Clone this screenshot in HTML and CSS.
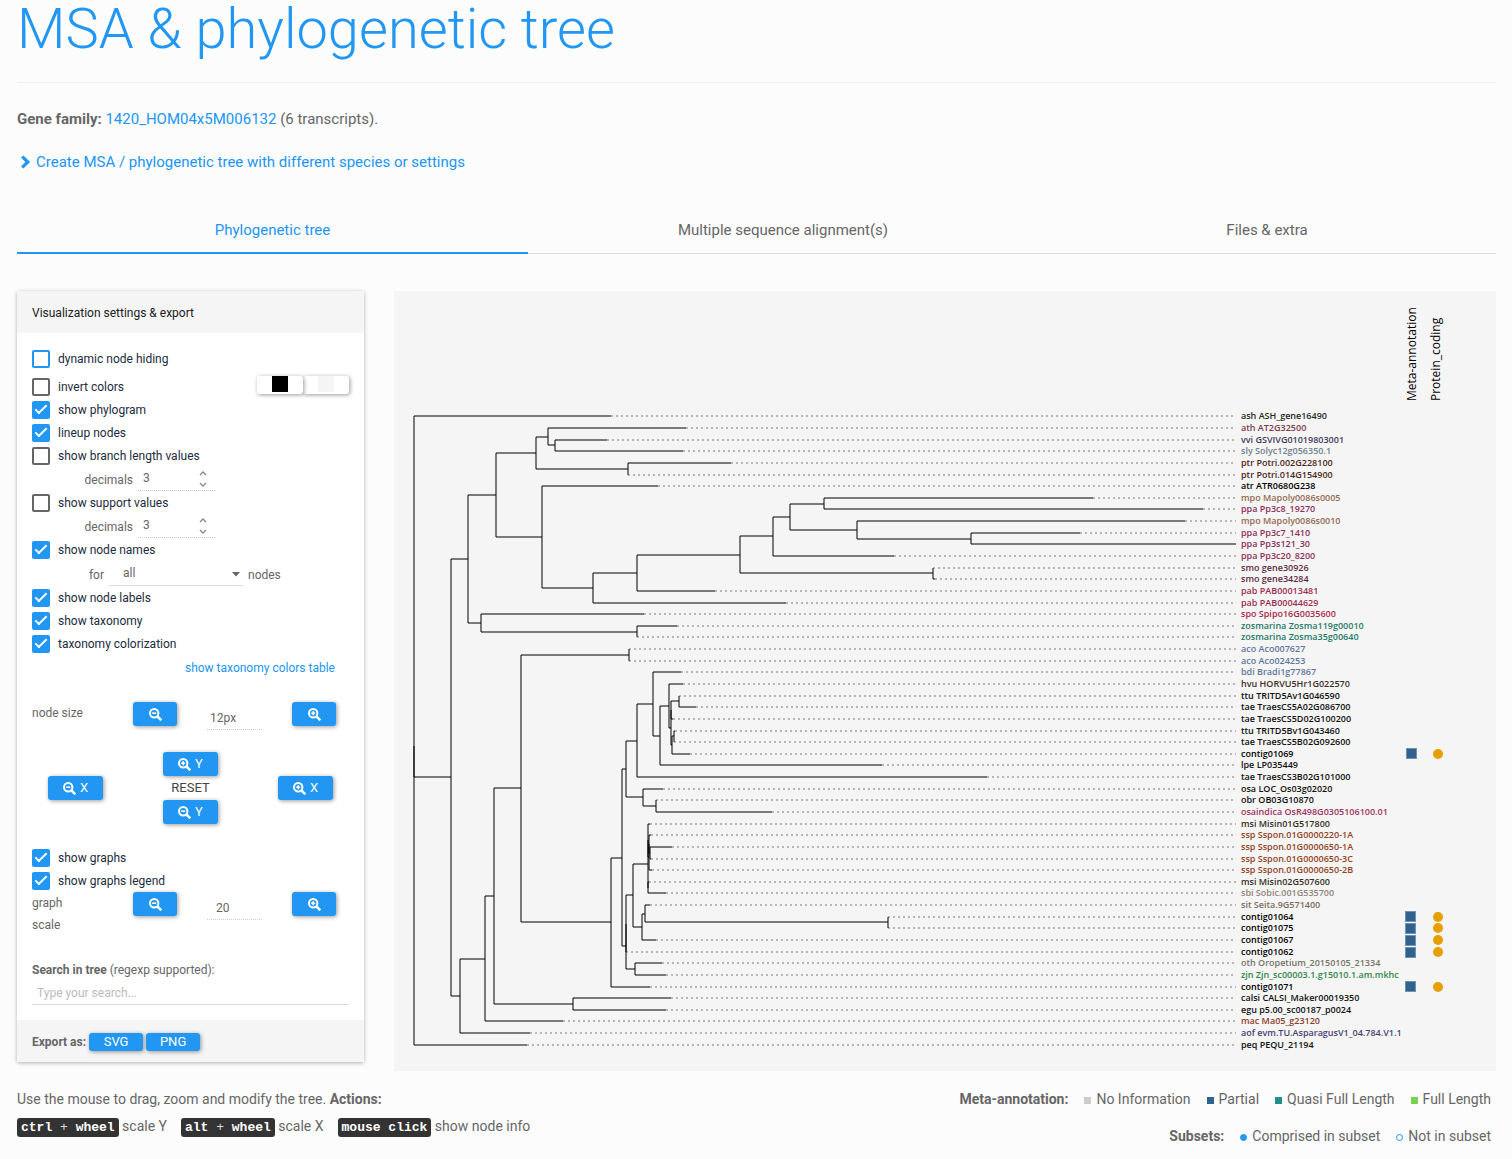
FILE: index.html
```html
<!DOCTYPE html>
<html lang="en">
<head>
<meta charset="utf-8">
<title>MSA &amp; phylogenetic tree</title>
<link rel="stylesheet" href="styles.css">
</head>
<body>
<svg class="sprite" aria-hidden="true">
  <symbol id="zoom-out" viewBox="0 0 13 13"><circle cx="5.2" cy="5.2" r="4.200" fill="none" stroke="currentColor" stroke-width="2"/><path d="M8.400 8.400L12.300 12.300" stroke="currentColor" stroke-width="2.600"/><path d="M3.200 5.200H7.200" stroke="currentColor" stroke-width="1.600"/></symbol>
  <symbol id="zoom-in" viewBox="0 0 13 13"><circle cx="5.2" cy="5.2" r="4.200" fill="none" stroke="currentColor" stroke-width="2"/><path d="M8.400 8.400L12.300 12.300" stroke="currentColor" stroke-width="2.600"/><path d="M3.200 5.200H7.200M5.200 3.200V7.200" stroke="currentColor" stroke-width="1.600"/></symbol>
  <symbol id="spin" viewBox="0 0 8 16"><path d="M1 4L4 1L7 4M1 12L4 15L7 12" fill="none" stroke="#888" stroke-width="1.3"/></symbol>
</svg>

<header>
  <h1>MSA &amp; phylogenetic tree</h1>
</header>

<p class="intro"><strong>Gene family:</strong> <a href="#family">1420_HOM04x5M006132</a> (6 transcripts).</p>
<p class="intro"><a href="#create" class="create"><svg width="11" height="14" viewBox="0 0 11 14" aria-hidden="true"><path d="M1 2.6L3.4 0.4L10.2 7L3.4 13.6L1 11.4L5.3 7Z" fill="currentColor"/></svg>Create MSA / phylogenetic tree with different species or settings</a></p>

<nav class="tabs">
  <a href="#tree" class="active">Phylogenetic tree</a>
  <a href="#msa">Multiple sequence alignment(s)</a>
  <a href="#files">Files &amp; extra</a>
</nav>

<main class="workspace">
  <form class="panel">
    <h2 class="panel-head">Visualization settings &amp; export</h2>
    <div class="panel-body">
      <label class="check first"><input type="checkbox" class="focus">dynamic node hiding</label>
      <div class="invert-row">
        <label class="check"><input type="checkbox">invert colors</label>
        <div class="swatches">
          <button type="button" aria-label="Foreground color"><span class="swatch black"></span></button><button type="button" aria-label="Background color"><span class="swatch light"></span></button>
        </div>
      </div>
      <label class="check"><input type="checkbox" checked>show phylogram</label>
      <label class="check"><input type="checkbox" checked>lineup nodes</label>
      <label class="check"><input type="checkbox">show branch length values</label>
      <div class="sub">
        <label for="dec1">decimals</label>
        <span class="number"><input id="dec1" type="number" value="3"><svg width="8" height="16" aria-hidden="true"><use href="#spin"/></svg></span>
      </div>
      <label class="check"><input type="checkbox">show support values</label>
      <div class="sub">
        <label for="dec2">decimals</label>
        <span class="number"><input id="dec2" type="number" value="3"><svg width="8" height="16" aria-hidden="true"><use href="#spin"/></svg></span>
      </div>
      <label class="check"><input type="checkbox" checked>show node names</label>
      <div class="sub names">
        <label for="which">for</label>
        <span class="choice"><select id="which"><option>all</option></select><svg width="8" height="5" viewBox="0 0 8 5" aria-hidden="true"><path d="M0 0H8L4 4.500Z" fill="#666"/></svg></span>
        <span>nodes</span>
      </div>
      <label class="check"><input type="checkbox" checked>show node labels</label>
      <label class="check"><input type="checkbox" checked>show taxonomy</label>
      <label class="check"><input type="checkbox" checked>taxonomy colorization</label>
      <p class="taxonomy"><a href="#colors">show taxonomy colors table</a></p>

      <div class="scale">
        <label for="size">node size</label>
        <button type="button" class="btn" aria-label="Smaller nodes"><svg class="icon"><use href="#zoom-out"/></svg></button>
        <input id="size" type="text" value="12px">
        <button type="button" class="btn" aria-label="Larger nodes"><svg class="icon"><use href="#zoom-in"/></svg></button>
      </div>

      <div class="pad">
        <button type="button" class="btn"><svg class="icon"><use href="#zoom-out"/></svg>X</button>
        <div class="pad-mid">
          <button type="button" class="btn"><svg class="icon"><use href="#zoom-in"/></svg>Y</button>
          <button type="button" class="reset">RESET</button>
          <button type="button" class="btn"><svg class="icon"><use href="#zoom-out"/></svg>Y</button>
        </div>
        <button type="button" class="btn"><svg class="icon"><use href="#zoom-in"/></svg>X</button>
      </div>

      <label class="check"><input type="checkbox" checked>show graphs</label>
      <label class="check"><input type="checkbox" checked>show graphs legend</label>
      <div class="scale graph">
        <label for="gscale">graph<br>scale</label>
        <button type="button" class="btn" aria-label="Smaller graphs"><svg class="icon"><use href="#zoom-out"/></svg></button>
        <input id="gscale" type="text" value="20">
        <button type="button" class="btn" aria-label="Larger graphs"><svg class="icon"><use href="#zoom-in"/></svg></button>
      </div>

      <label for="search" class="search-label"><strong>Search in tree</strong> (regexp supported):</label>
      <input id="search" class="search" type="text" placeholder="Type your search...">
    </div>
    <div class="panel-foot"><strong>Export as:</strong><button type="button" class="btn export">SVG</button><button type="button" class="btn export">PNG</button></div>
  </form>

  <svg class="tree" viewBox="394 291 1102 780" role="img" aria-label="Phylogenetic tree">
    <g class="branches">
      <path d="M611 416H414V746"/><path d="M414 746V777H451"/><path d="M414 746V1045H527"/>
      <path d="M468 559H451V996H460"/><path d="M485 959H460V1033H530"/>
      <path d="M496 495H468V623H481"/><path d="M536 453H496V537H542"/>
      <path d="M548 437H536V469H628"/><path d="M686 428H548V445H555"/>
      <path d="M607 440H555V451H683"/><path d="M731 463H628V475"/>
      <path d="M658 486H542V588H593"/><path d="M637 573H593V603H786"/>
      <path d="M740 555H637V591H715"/><path d="M773 536H740V573H933"/>
      <path d="M790 517H773V556H894"/><path d="M824 504H790V530H857"/>
      <path d="M1093 498H824V509H1203"/><path d="M1185 521H857V539H971"/>
      <path d="M1080 533H971V544H1236"/><path d="M933 568V579H935"/>
      <path d="M644 614H481V632H637"/><path d="M677 626H637V637"/>
      <path d="M494 896H485V1021H563"/><path d="M521 788H494V1004H573"/>
      <path d="M671 998H573V1010H666"/><path d="M629 655H521V922H611"/>
      <path d="M629 649V661"/><path d="M622 858H611V987H650"/>
      <path d="M626 769H622V946H626"/><path d="M637 741H626V797H643"/>
      <path d="M653 704H637V777H987"/><path d="M681 672H653V736H660"/>
      <path d="M669 706H660V765H882"/><path d="M683 684H669V728H671"/>
      <path d="M671 710V745H672"/><path d="M679 701H671V719H673"/>
      <path d="M679 696V707H696"/><path d="M674 736H672V754H690"/>
      <path d="M675 731H674V742"/><path d="M663 789H643V806H656"/>
      <path d="M656 800V812H772"/><path d="M626 924V969H635"/>
      <path d="M633 895H626V952"/><path d="M662 963H635V975H666"/>
      <path d="M648 864H633V927H642"/><path d="M645 914H642V940H656"/>
      <path d="M650 905H645V922H888"/><path d="M888 917V928"/>
      <path d="M648 840V888"/><path d="M650 824H648V857H649"/>
      <path d="M649 882H648V893H666"/><path d="M649 844V870H652"/>
      <path d="M651 835H649V853H650"/><path d="M672 847H650V859H651"/>
    </g>
    <path class="guides" d="M611 416H1236M686 428H1236M607 440H1236M683 451H1236M731 463H1236M628 475H1236M658 486H1236M1093 498H1236M1203 509H1236M1185 521H1236M1080 533H1236M894 556H1236M933 568H1236M935 579H1236M715 591H1236M786 603H1236M644 614H1236M677 626H1236M637 637H1236M629 649H1236M629 661H1236M681 672H1236M683 684H1236M679 696H1236M696 707H1236M673 719H1236M675 731H1236M674 742H1236M690 754H1236M882 765H1236M987 777H1236M663 789H1236M656 800H1236M772 812H1236M650 824H1236M651 835H1236M672 847H1236M651 859H1236M652 870H1236M649 882H1236M666 893H1236M650 905H1236M888 917H1236M888 928H1236M656 940H1236M626 952H1236M662 963H1236M666 975H1236M650 987H1236M671 998H1236M666 1010H1236M563 1021H1236M530 1033H1236M527 1045H1236"/>
    <g class="leaves">
      <text x="1241" y="419" fill="#1d2b22">ash ASH_gene16490</text>
      <text x="1241" y="431" fill="#7a3b4e">ath AT2G32500</text>
      <text x="1241" y="443" fill="#3f3a5c">vvi GSVIVG01019803001</text>
      <text x="1241" y="454" fill="#71808c">sly Solyc12g056350.1</text>
      <text x="1241" y="466" fill="#4a2a20">ptr Potri.002G228100</text>
      <text x="1241" y="478" fill="#4a2a20">ptr Potri.014G154900</text>
      <text x="1241" y="489" fill="#000">atr ATR0680G238</text>
      <text x="1241" y="501" fill="#936a50">mpo Mapoly0086s0005</text>
      <text x="1241" y="512" fill="#8e2f5c">ppa Pp3c8_19270</text>
      <text x="1241" y="524" fill="#936a50">mpo Mapoly0086s0010</text>
      <text x="1241" y="536" fill="#8e2f5c">ppa Pp3c7_1410</text>
      <text x="1241" y="547" fill="#8e2f5c">ppa Pp3s121_30</text>
      <text x="1241" y="559" fill="#8e2f5c">ppa Pp3c20_8200</text>
      <text x="1241" y="571" fill="#5f2c3f">smo gene30926</text>
      <text x="1241" y="582" fill="#5f2c3f">smo gene34284</text>
      <text x="1241" y="594" fill="#9c2f50">pab PAB00013481</text>
      <text x="1241" y="606" fill="#9c2f50">pab PAB00044629</text>
      <text x="1241" y="617" fill="#a82a4a">spo Spipo16G0035600</text>
      <text x="1241" y="629" fill="#1f7a68">zosmarina Zosma119g00010</text>
      <text x="1241" y="640" fill="#1f7a68">zosmarina Zosma35g00640</text>
      <text x="1241" y="652" fill="#62759a">aco Aco007627</text>
      <text x="1241" y="664" fill="#62759a">aco Aco024253</text>
      <text x="1241" y="675" fill="#62759a">bdi Bradi1g77867</text>
      <text x="1241" y="687" fill="#3d2d28">hvu HORVU5Hr1G022570</text>
      <text x="1241" y="699" fill="#111">ttu TRITD5Av1G046590</text>
      <text x="1241" y="710" fill="#111">tae TraesCS5A02G086700</text>
      <text x="1241" y="722" fill="#111">tae TraesCS5D02G100200</text>
      <text x="1241" y="734" fill="#111">ttu TRITD5Bv1G043460</text>
      <text x="1241" y="745" fill="#111">tae TraesCS5B02G092600</text>
      <text x="1241" y="757" fill="#000">contig01069</text>
      <text x="1241" y="768" fill="#111">lpe LP035449</text>
      <text x="1241" y="780" fill="#111">tae TraesCS3B02G101000</text>
      <text x="1241" y="792" fill="#111">osa LOC_Os03g02020</text>
      <text x="1241" y="803" fill="#111">obr OB03G10870</text>
      <text x="1241" y="815" fill="#9c3460">osaindica OsR498G0305106100.01</text>
      <text x="1241" y="827" fill="#35301f">msi Misin01G517800</text>
      <text x="1241" y="838" fill="#8f4424">ssp Sspon.01G0000220-1A</text>
      <text x="1241" y="850" fill="#8f4424">ssp Sspon.01G0000650-1A</text>
      <text x="1241" y="862" fill="#8f4424">ssp Sspon.01G0000650-3C</text>
      <text x="1241" y="873" fill="#8f4424">ssp Sspon.01G0000650-2B</text>
      <text x="1241" y="885" fill="#35301f">msi Misin02G507600</text>
      <text x="1241" y="896" fill="#918379">sbi Sobic.001G535700</text>
      <text x="1241" y="908" fill="#7c6d5e">sit Seita.9G571400</text>
      <text x="1241" y="920" fill="#000">contig01064</text>
      <text x="1241" y="931" fill="#000">contig01075</text>
      <text x="1241" y="943" fill="#000">contig01067</text>
      <text x="1241" y="955" fill="#000">contig01062</text>
      <text x="1241" y="966" fill="#757468">oth Oropetium_20150105_21334</text>
      <text x="1241" y="978" fill="#2f8648">zjn Zjn_sc00003.1.g15010.1.am.mkhc</text>
      <text x="1241" y="990" fill="#000">contig01071</text>
      <text x="1241" y="1001" fill="#111">calsi CALSI_Maker00019350</text>
      <text x="1241" y="1013" fill="#111">egu p5.00_sc00187_p0024</text>
      <text x="1241" y="1024" fill="#8c402c">mac Ma05_g23120</text>
      <text x="1241" y="1036" fill="#474270">aof evm.TU.AsparagusV1_04.784.V1.1</text>
      <text x="1241" y="1048" fill="#111">peq PEQU_21194</text>
    </g>
    <g class="columns">
      <text transform="translate(1416 401) rotate(-90)">Meta-annotation</text>
      <text transform="translate(1440 401) rotate(-90)">Protein_coding</text>
    </g>
    <g class="meta">
      <rect x="1406.500" y="748.500" width="10" height="10"/>
      <rect x="1405.500" y="911.500" width="10" height="10"/>
      <rect x="1405.500" y="923.500" width="10" height="10"/>
      <rect x="1405.500" y="935.500" width="10" height="10"/>
      <rect x="1405.500" y="947.500" width="10" height="10"/>
      <rect x="1405.500" y="981.500" width="10" height="10"/>
    </g>
    <g fill="#e69f00">
      <circle cx="1438" cy="754" r="5"/><circle cx="1438" cy="917" r="5"/><circle cx="1438" cy="928" r="5"/><circle cx="1438" cy="940" r="5"/><circle cx="1438" cy="952" r="5"/><circle cx="1438" cy="987" r="5"/>
    </g>
  </svg>
</main>

<footer class="notes">
  <div>
    <p>Use the mouse to drag, zoom and modify the tree. <strong>Actions:</strong></p>
    <p class="keys"><span><kbd><b>ctrl</b> + <b>wheel</b></kbd> scale Y</span><span><kbd><b>alt</b> + <b>wheel</b></kbd> scale X</span><span><kbd><b>mouse click</b></kbd> show node info</span></p>
  </div>
  <div class="legends">
    <ul><li><strong>Meta-annotation:</strong></li><li><i class="sq none"></i>No Information</li><li><i class="sq partial"></i>Partial</li><li><i class="sq quasi"></i>Quasi Full Length</li><li><i class="sq full"></i>Full Length</li></ul>
    <ul><li><strong>Subsets:</strong></li><li><i class="dot on"></i>Comprised in subset</li><li><i class="dot"></i>Not in subset</li></ul>
  </div>
</footer>
</body>
</html>
```
FILE: styles.css
```css
* { box-sizing: border-box; }

body {
  margin: 0;
  padding: 1px 16px 12px 17px;
  background: #fcfcfc;
  color: #666;
  font: 15px/22px Roboto, sans-serif;
}

a { color: #2196f3; text-decoration: none; }
p { margin: 0; }
button, input, select { font: inherit; color: inherit; }
strong { font-weight: 700; }
.sprite { display: none; }

h1 {
  margin: 0;
  padding-bottom: 25px;
  border-bottom: 1px solid #eee;
  color: #2196f3;
  font-size: 56px;
  font-weight: 300;
  line-height: 56px;
}

.intro { margin-top: 25px; }
.intro + .intro { margin-top: 21px; }
.create { display: flex; align-items: center; gap: 5px; padding-left: 3px; }

.tabs {
  display: grid;
  grid-template-columns: 511fr 510fr 458fr;
  margin-top: 35px;
}
.tabs a {
  height: 46px;
  padding-top: 11px;
  border-bottom: 1px solid #ddd;
  color: #666;
  text-align: center;
}
.tabs .active { border-bottom: 2px solid #2196f3; color: #2196f3; }

.workspace {
  display: flex;
  align-items: flex-start;
  gap: 30px;
  margin-top: 37px;
}

/* Settings panel */
.panel {
  flex: none;
  width: 347px;
  background: #fff;
  border-radius: 2px;
  box-shadow: 0 1px 4px rgba(0, 0, 0, .3);
  font-size: 12px;
}
.panel-head {
  margin: 0;
  padding: 11px 15px 9px;
  background: #f5f5f5;
  color: #212121;
  font-size: 12px;
  font-weight: 400;
  line-height: 22px;
}
.panel-body { padding: 14px 15px 15px; }

.check {
  display: flex;
  align-items: center;
  gap: 8px;
  height: 23px;
  color: #212b3c;
}
.check.first { margin-bottom: 5px; }
.check input {
  appearance: none;
  display: grid;
  place-content: center;
  width: 18px;
  height: 18px;
  margin: 0;
  border: 2px solid #666;
  border-radius: 2px;
}
.check .focus { border-color: #2196f3; }
.check input:checked { background: #2196f3; border-color: #2196f3; }
.check input:checked::after {
  content: "";
  box-sizing: border-box;
  width: 6px;
  height: 12px;
  margin-bottom: 3px;
  border: solid #fff;
  border-width: 0 2px 2px 0;
  transform: rotate(45deg);
}

.invert-row { display: flex; justify-content: space-between; }
.swatches { display: flex; padding-top: 1px; }
.swatches button {
  width: 46px;
  height: 18px;
  padding: 0;
  border: 0;
  border-radius: 3px;
  background: #fff;
  box-shadow: 1px 1px 4px rgba(0, 0, 0, .4);
  line-height: 16px;
}
.swatches button:first-child { z-index: 1; }
.swatch { display: block; width: 16px; height: 16px; margin: 0 auto 2px; }
.black { background: #000; }
.light { background: #f5f5f5; }

.sub { display: flex; align-items: flex-end; height: 24px; gap: 5px; line-height: 21px; }
.sub label { width: 101px; text-align: right; }
.number {
  display: flex;
  align-items: center;
  width: 77px;
  height: 24px;
  padding: 0 8px 0 5px;
  border-bottom: 1px dotted #ccc;
}
.number input {
  appearance: textfield;
  flex: 1;
  min-width: 0;
  padding: 0;
  border: 0;
  background: none;
}
.names { height: 25px; }
.names label { width: 72px; }
.choice { display: grid; align-items: center; width: 134px; }
.choice select {
  appearance: none;
  grid-area: 1 / 1;
  height: 24px;
  padding: 0 14px;
  border: 0;
  border-bottom: 1px solid #ddd;
  background: none;
}
.choice svg { grid-area: 1 / 1; justify-self: end; margin-right: 3px; pointer-events: none; }

.taxonomy { padding: 2px 14px 0 0; text-align: right; }

.btn {
  display: flex;
  align-items: center;
  justify-content: center;
  gap: 4px;
  height: 24px;
  padding: 0;
  border: 0;
  border-radius: 3px;
  background: #2196f3;
  box-shadow: 1px 1px 4px rgba(0, 0, 0, .4);
  color: #fff;
  font-size: 13px;
}
.icon { width: 13px; height: 13px; }

.scale { display: flex; align-items: flex-start; margin-top: 23px; }
.scale label { width: 101px; }
.scale .btn { width: 44px; }
.scale input {
  width: 55px;
  height: 24px;
  margin: 4px 30px 0;
  padding: 0 3px;
  border: 0;
  border-bottom: 1px dotted #ccc;
  background: none;
}
.graph { margin-top: 0; }
.graph input { padding: 0 9px; }

.pad {
  display: grid;
  grid-template-columns: 55px 55px 55px;
  gap: 60px;
  align-items: center;
  margin: 22px 16px;
}
.pad-mid { display: grid; }
.reset {
  height: 24px;
  padding: 0;
  border: 0;
  background: none;
  color: #444;
  font-size: 13px;
}

.search-label { display: block; margin-top: 23px; }
.search {
  width: 100%;
  height: 24px;
  padding: 0 5px;
  border: 0;
  border-bottom: 1px solid #ddd;
  background: none;
}
.search::placeholder { color: #bbb; }

.panel-foot {
  display: flex;
  align-items: center;
  gap: 3px;
  height: 42px;
  padding: 1px 15px 0;
  background: #f5f5f5;
}
.export { width: 54px; height: 18px; }

/* Tree canvas */
.tree { flex: 1; min-width: 0; background: #f5f5f5; }
.branches { fill: none; stroke: #000; }
.guides { fill: none; stroke: #000; stroke-opacity: .5; stroke-dasharray: 2 3; }
.leaves { font: 600 9px "Open Sans", sans-serif; }
.columns { font: 12px "Open Sans", sans-serif; }
.meta { fill: #31628d; stroke: #6f92b0; }

/* Notes below the tree */
.notes {
  display: flex;
  justify-content: space-between;
  margin-top: 17px;
  font-size: 14px;
}
.keys { display: flex; gap: 14px; margin-top: 5px; }
kbd {
  display: inline-block;
  padding: 0 4px;
  border-radius: 3px;
  background: #333;
  color: #ddd;
  font: 13px/19px "Liberation Mono", monospace;
}
kbd b { color: #fff; }
.legends { padding-right: 5px; }
.legends ul {
  display: flex;
  justify-content: flex-end;
  gap: 16px;
  margin: 0 0 15px;
  padding: 0;
  list-style: none;
}
.sq { display: inline-block; width: 7px; height: 7px; margin-right: 5px; }
.none { background: #ccc; }
.partial { background: #31628d; }
.quasi { background: #21908c; }
.full { background: #7ad151; }
.dot {
  display: inline-block;
  width: 7px;
  height: 7px;
  margin-right: 5px;
  border: 1px solid #2196f3;
  border-radius: 50%;
}
.on { background: #2196f3; }
```
